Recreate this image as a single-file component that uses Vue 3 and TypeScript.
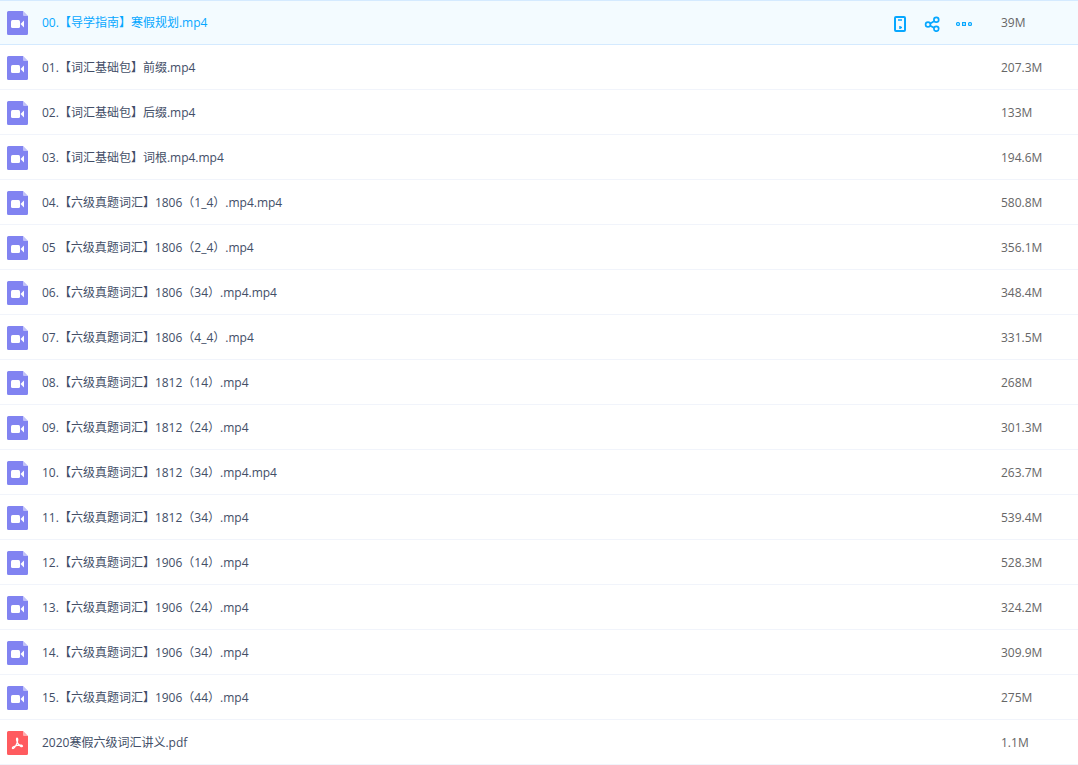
<script setup lang="ts">
interface FileEntry {
  name: string
  size: string
  kind: 'video' | 'pdf'
}

const video = (name: string, size: string): FileEntry => ({ name, size, kind: 'video' })

const files: FileEntry[] = [
  video('00.【导学指南】寒假规划.mp4', '39M'),
  video('01.【词汇基础包】前缀.mp4', '207.3M'),
  video('02.【词汇基础包】后缀.mp4', '133M'),
  video('03.【词汇基础包】词根.mp4.mp4', '194.6M'),
  video('04.【六级真题词汇】1806（1_4）.mp4.mp4', '580.8M'),
  video('05 【六级真题词汇】1806（2_4）.mp4', '356.1M'),
  video('06.【六级真题词汇】1806（34）.mp4.mp4', '348.4M'),
  video('07.【六级真题词汇】1806（4_4）.mp4', '331.5M'),
  video('08.【六级真题词汇】1812（14）.mp4', '268M'),
  video('09.【六级真题词汇】1812（24）.mp4', '301.3M'),
  video('10.【六级真题词汇】1812（34）.mp4.mp4', '263.7M'),
  video('11.【六级真题词汇】1812（34）.mp4', '539.4M'),
  video('12.【六级真题词汇】1906（14）.mp4', '528.3M'),
  video('13.【六级真题词汇】1906（24）.mp4', '324.2M'),
  video('14.【六级真题词汇】1906（34）.mp4', '309.9M'),
  video('15.【六级真题词汇】1906（44）.mp4', '275M'),
  { name: '2020寒假六级词汇讲义.pdf', size: '1.1M', kind: 'pdf' },
]

const activeIndex = 0
</script>

<template>
  <table class="files">
    <tbody>
      <tr v-for="(file, i) in files" :key="file.name" :class="{ active: i === activeIndex }">
        <td class="name">
          <div class="entry">
            <svg class="icon" width="21" height="24" viewBox="0 0 21 24" aria-hidden="true">
              <path
                :class="file.kind"
                d="M1.5 0H16l5 5v17.5a1.5 1.5 0 0 1-1.5 1.5h-18A1.5 1.5 0 0 1 0 22.5v-21A1.5 1.5 0 0 1 1.5 0z"
              />
              <path class="fold" d="M16 0l5 5h-4a1 1 0 0 1-1-1z" />
              <g v-if="file.kind === 'video'" fill="#fff">
                <rect x="4" y="9" width="9" height="8" rx="1.5" />
                <path d="M13.5 13L17 9.5v7z" />
              </g>
              <path
                v-else
                class="acrobat"
                d="M10 7.2c1.2 0 .8 3-.2 5.300C8.700 15 6.800 18 5.600 17.500c-1.200-.8 1.800-2.500 4.800-3.100 3-.6 5.600-.2 5.100.9-.6 1-3.200-.6-4.500-2.700C9.700 10.400 9 7.200 10 7.200z"
              />
            </svg>
            <a href="#" @click.prevent>{{ file.name }}</a>
          </div>
        </td>
        <td class="tools">
          <div v-if="i === activeIndex" class="actions">
            <button type="button" aria-label="发送到手机">
              <svg width="16" height="16" viewBox="0 0 16 16" fill="none">
                <rect x="3" y="1" width="10" height="14" rx="1" stroke="#06a7ff" stroke-width="2" />
                <path d="M6 4h4M8 10v3M8 11.500h2" stroke="#06a7ff" stroke-width="1.500" />
              </svg>
            </button>
            <button type="button" aria-label="分享">
              <svg width="16" height="16" viewBox="0 0 16 16" fill="none" stroke="#06a7ff" stroke-width="1.700">
                <circle cx="4" cy="8.500" r="2.400" />
                <circle cx="12.300" cy="3.800" r="2.400" />
                <circle cx="12.300" cy="12.800" r="2.400" />
                <path d="M6.300 7.500L10 5.300M6.300 9.700L10 11.800" />
              </svg>
            </button>
            <button type="button" aria-label="更多">
              <svg width="16" height="16" viewBox="0 0 16 16" fill="none" stroke="#06a7ff" stroke-width="1.200">
                <rect x="0.600" y="6.600" width="2.800" height="2.800" rx="1" />
                <rect x="6.600" y="6.600" width="2.800" height="2.800" />
                <rect x="12.600" y="6.600" width="2.800" height="2.800" rx="1" />
              </svg>
            </button>
          </div>
        </td>
        <td class="size">{{ file.size }}</td>
      </tr>
    </tbody>
  </table>
</template>

<style scoped>
.files {
  width: 100%;
  border-spacing: 0;
  table-layout: fixed;
  background: #fff;
  font-family: "Open Sans", "Noto Sans CJK SC", sans-serif;
  font-size: 12px;
  line-height: 20px;
}

td {
  box-sizing: border-box;
  height: 45px;
  padding: 2px 0 0;
  border-bottom: 1px solid #f1f4fb;
  vertical-align: middle;
}

.active td {
  padding-top: 0;
  background: #f3fbff;
  border-top: 1px solid #d4eaff;
  border-bottom-color: #d4eaff;
}

.entry {
  display: flex;
  align-items: center;
  gap: 14px;
  padding-left: 7px;
}

.icon {
  flex: none;
}

.video {
  fill: #8183f1;
}

.pdf {
  fill: #ff5b5f;
}

.fold {
  fill: #fff;
  fill-opacity: 0.5;
}

.acrobat {
  fill: none;
  stroke: #fff;
  stroke-width: 1.2;
}

a {
  color: #424e67;
  text-decoration: none;
  white-space: nowrap;
}

.active a {
  color: #06a7ff;
}

.tools {
  width: 109px;
}

.actions {
  display: flex;
  gap: 16px;
  padding-top: 2px;
}

button {
  display: flex;
  padding: 0;
  border: 0;
  background: none;
  cursor: pointer;
}

.size {
  width: 77px;
  color: #666;
}
</style>

<style>
body {
  margin: 0;
  background: #fff;
}
</style>
